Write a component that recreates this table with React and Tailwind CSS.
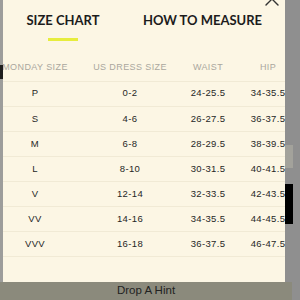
const rows = [
  ["P", "0-2", "24-25.5", "34-35.5"],
  ["S", "4-6", "26-27.5", "36-37.5"],
  ["M", "6-8", "28-29.5", "38-39.5"],
  ["L", "8-10", "30-31.5", "40-41.5"],
  ["V", "12-14", "32-33.5", "42-43.5"],
  ["VV", "14-16", "34-35.5", "44-45.5"],
  ["VVV", "16-18", "36-37.5", "46-47.5"],
];

const headers = ["MONDAY SIZE", "US DRESS SIZE", "WAIST", "HIP"];

const SizeChartModal = () => {
  return (
    <div className="absolute left-[3px] top-0 w-[282px] h-[282px] bg-[#fcf6e4] overflow-hidden">
      {/* close */}
      <svg
        className="absolute left-[262px] top-[-8px] text-[#333]"
        width="14"
        height="14"
        viewBox="0 0 14 14"
        fill="none"
        stroke="currentColor"
        strokeWidth="1.4"
        strokeLinecap="round"
      >
        <path d="M1 1L13 13M13 1L1 13" />
      </svg>

      {/* tabs */}
      <div className="flex pt-[12px] font-['Lato',sans-serif] font-bold text-[13px] leading-[16px] text-[#1c1c1c]">
        <div className="w-[120px] flex flex-col items-center">
          <span>SIZE CHART</span>
          <div className="mt-[10px] w-[30px] h-[2.5px] bg-[#e7ed3d]"></div>
        </div>
        <div className="w-[121px] ml-[19px] text-center">HOW TO MEASURE</div>
      </div>

      {/* table */}
      <div className="mt-[15px] ml-[-13px] w-[310px] font-['Liberation_Sans',Arial,sans-serif]">
        <div className="grid grid-cols-[90px_100px_56px_64px] h-[26px] items-center border-b border-[#f1ead5] text-[9px] tracking-[0.4px] text-[#aaa79e]">
          {headers.map((h) => (
            <div key={h} className="text-center whitespace-nowrap">
              {h}
            </div>
          ))}
        </div>
        {rows.map((r) => (
          <div
            key={r[0]}
            className="grid grid-cols-[90px_100px_56px_64px] h-[25.15px] items-center border-b border-[#f1ead5] text-[9.5px] tracking-[0.35px] text-[#262626]"
          >
            {r.map((c, i) => (
              <div key={i} className="text-center whitespace-nowrap">
                {c}
              </div>
            ))}
          </div>
        ))}
      </div>
    </div>
  );
};

export default function App() {
  return (
    <div className="relative w-[300px] h-[300px] overflow-hidden bg-[#8f8f8f] flex flex-col">
      <div className="flex-1 flex">
        <div className="w-[3px] bg-[#9d9d9b] flex flex-col">
          <div className="h-[65px]"></div>
          <div className="h-[14px] bg-[#1e1e1e]"></div>
        </div>
        <div className="w-[282px]"></div>
        <div className="w-[8px] flex flex-col">
          <div className="h-[145px]"></div>
          <div className="h-[23px] bg-[#a3a29b]"></div>
          <div className="h-[16px]"></div>
          <div className="h-[40px] bg-black"></div>
        </div>
      </div>
      <div className="h-[18px] w-[292px] bg-[#8b8a7c] flex items-center justify-center font-['Liberation_Sans',Arial,sans-serif] text-[11.5px] text-[#222]">
        Drop A Hint
      </div>
      <SizeChartModal />
    </div>
  );
}
